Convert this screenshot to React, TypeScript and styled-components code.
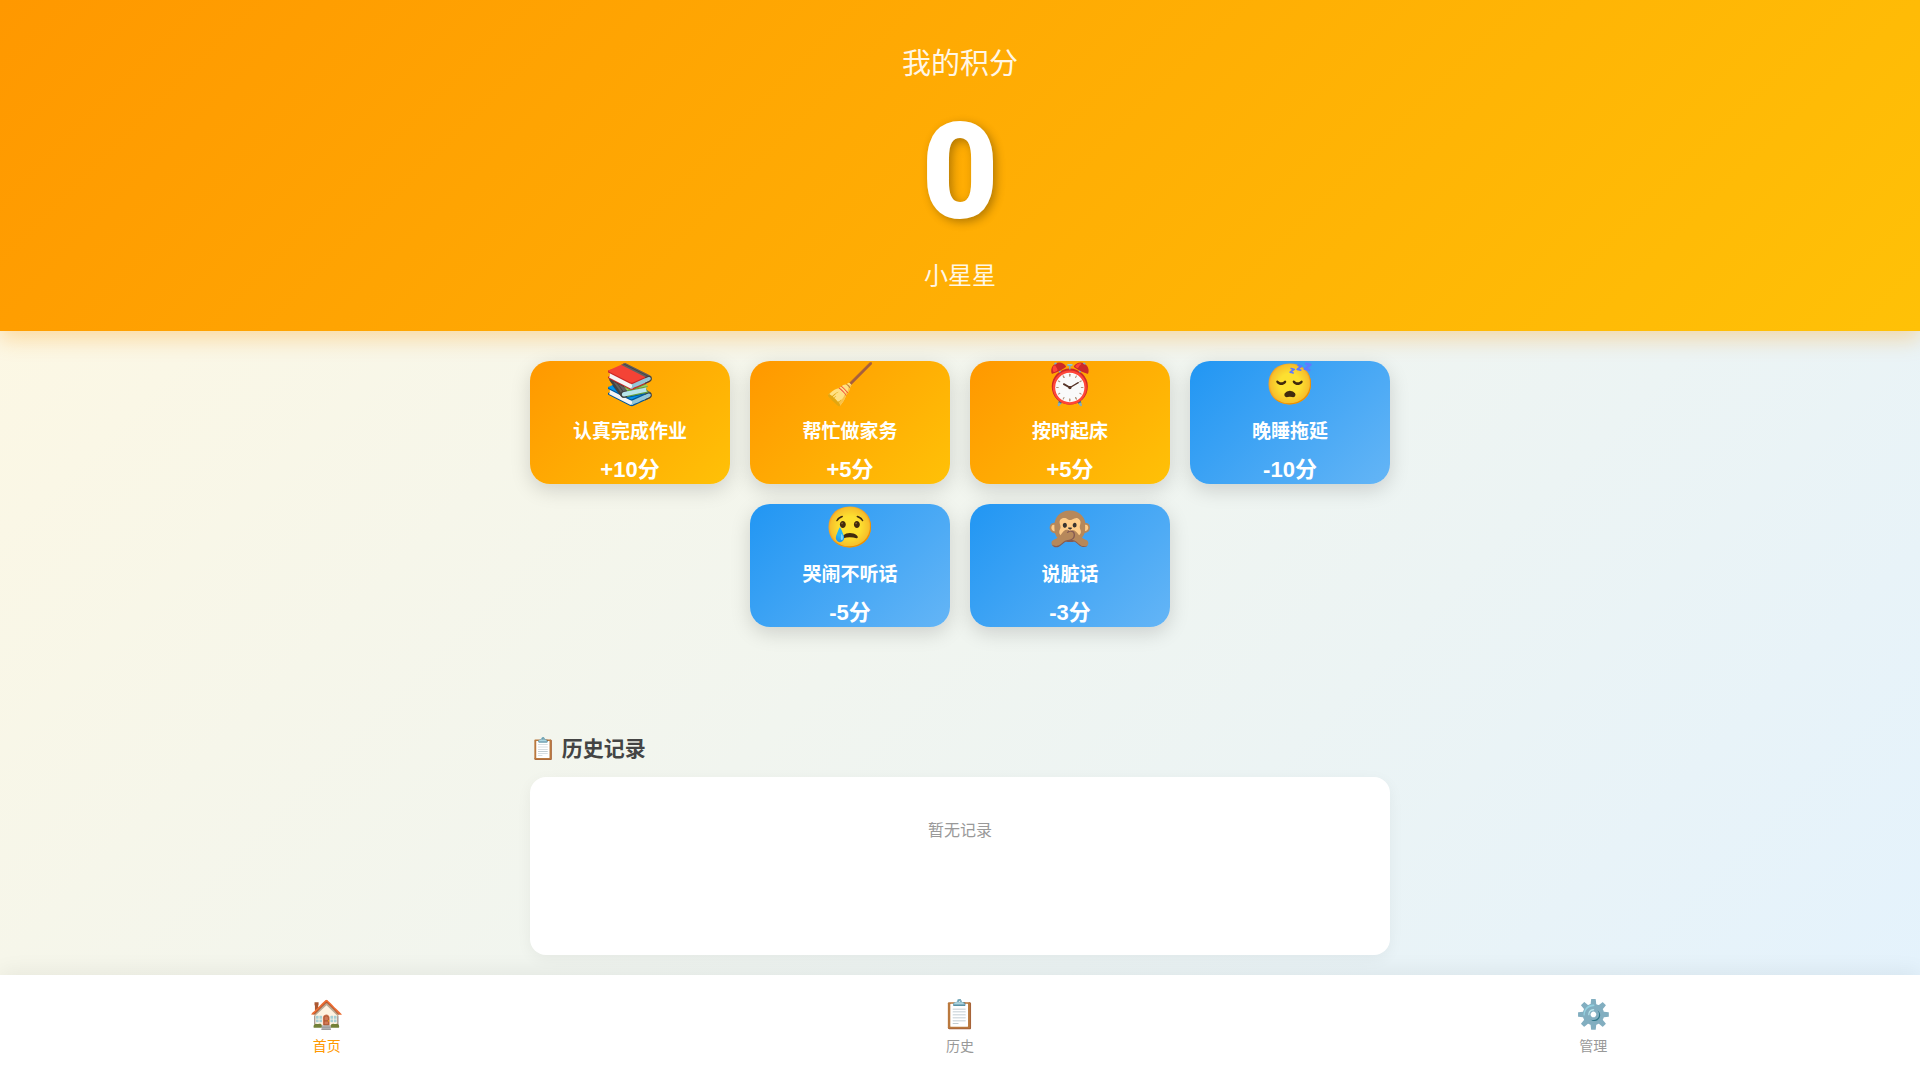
import { FC } from 'react'
import styled, { createGlobalStyle } from 'styled-components'

// Data
const actions = [
    { icon: '📚', name: '认真完成作业', points: 10 },
    { icon: '🧹', name: '帮忙做家务', points: 5 },
    { icon: '⏰', name: '按时起床', points: 5 },
    { icon: '😴', name: '晚睡拖延', points: -10 },
    { icon: '😢', name: '哭闹不听话', points: -5 },
    { icon: '🙊', name: '说脏话', points: -3 },
];

const tabs = [
    { icon: '🏠', label: '首页' },
    { icon: '📋', label: '历史' },
    { icon: '⚙️', label: '管理' },
];

const GlobalStyle = createGlobalStyle`
    * {
        box-sizing: border-box;
        margin: 0;
        padding: 0;
    }

    body {
        font-family: "Liberation Sans", "Noto Sans CJK SC", sans-serif;
    }
`;

const Page = styled.div`
    display: flex;
    flex-direction: column;
    min-height: 100vh;
    background: linear-gradient(135deg, #fff8e1 0%, #e3f2fd 100%);
`;

const Header = styled.header`
    padding: 40px 20px 36px;
    background: linear-gradient(135deg, #ff9800 0%, #ffc107 100%);
    box-shadow: 0 8px 20px rgba(255, 152, 0, 0.3);
    color: #fff;
    text-align: center;
`;

const Title = styled.h1`
    font-size: 29px;
    font-weight: 400;
    line-height: 48px;
    opacity: 0.9;
`;

const Score = styled.div`
    margin: 17px 0;
    font-family: Roboto, sans-serif;
    font-size: 133px;
    font-weight: 900;
    line-height: 135px;
    text-shadow: 3px 3px 10px rgba(0, 0, 0, 0.3);
`;

const ChildName = styled.p`
    font-size: 24px;
    line-height: 38px;
    opacity: 0.9;
`;

const Content = styled.main`
    display: flex;
    flex-direction: column;
    flex-grow: 1;
    width: 100%;
    max-width: 900px;
    margin: 0 auto;
    padding: 30px 20px 20px;
`;

const Actions = styled.div`
    display: flex;
    flex-wrap: wrap;
    justify-content: center;
    gap: 20px;
`;

const ActionButton = styled.button<{ $negative: boolean }>`
    display: flex;
    flex-direction: column;
    align-items: center;
    gap: 10px;
    width: 200px;
    border: 0;
    border-radius: 20px;
    background: ${({ $negative }) => $negative
        ? 'linear-gradient(135deg, #2196f3 0%, #64b5f6 100%)'
        : 'linear-gradient(135deg, #ff9800 0%, #ffc107 100%)'};
    box-shadow: 0 6px 20px rgba(0, 0, 0, 0.15);
    color: #fff;
    font-family: inherit;
    font-weight: 700;
    cursor: pointer;
`;

const ActionIcon = styled.span`
    font-size: 40px;
    line-height: 46px;
`;

const ActionName = styled.span`
    font-size: 19px;
    line-height: 29px;
`;

const ActionPoints = styled.span`
    font-size: 22px;
    line-height: 28px;
`;

const History = styled.section`
    display: flex;
    flex-direction: column;
    flex-grow: 1;
    margin-top: 106px;
`;

const HistoryTitle = styled.h2`
    margin-bottom: 12px;
    color: #444;
    font-size: 21px;
    line-height: 32px;
`;

const HistoryList = styled.div`
    flex-grow: 1;
    min-height: 178px;
    padding: 40px 20px;
    border-radius: 16px;
    background: #fff;
    box-shadow: 0 4px 15px rgba(0, 0, 0, 0.05);
    color: #999;
    font-size: 16px;
    line-height: 28px;
    text-align: center;
`;

const TabBar = styled.nav`
    display: flex;
    padding: 20px 10px 23px;
    background: #fff;
    box-shadow: 0 -4px 20px rgba(0, 0, 0, 0.06);
`;

const Tab = styled.button<{ $active: boolean }>`
    display: flex;
    flex: 1;
    flex-direction: column;
    align-items: center;
    border: 0;
    background: none;
    color: ${({ $active }) => $active ? '#ff9800' : '#999'};
    font-family: inherit;
    font-size: 14px;
    line-height: 22px;
    cursor: pointer;
`;

const TabIcon = styled.span`
    font-size: 28px;
    line-height: 40px;
`;

const App: FC = () => {
    return (
        <Page>
            <GlobalStyle />
            <Header>
                <Title>我的积分</Title>
                <Score>0</Score>
                <ChildName>小星星</ChildName>
            </Header>
            <Content>
                <Actions>
                    {actions.map(({ icon, name, points }) => (
                        <ActionButton key={name} $negative={points < 0}>
                            <ActionIcon>{icon}</ActionIcon>
                            <ActionName>{name}</ActionName>
                            <ActionPoints>{points > 0 ? `+${points}` : points}分</ActionPoints>
                        </ActionButton>
                    ))}
                </Actions>
                <History>
                    <HistoryTitle>📋 历史记录</HistoryTitle>
                    <HistoryList>暂无记录</HistoryList>
                </History>
            </Content>
            <TabBar>
                {tabs.map(({ icon, label }, index) => (
                    <Tab key={label} $active={index === 0}>
                        <TabIcon>{icon}</TabIcon>
                        {label}
                    </Tab>
                ))}
            </TabBar>
        </Page>
    );
}

export default App;
